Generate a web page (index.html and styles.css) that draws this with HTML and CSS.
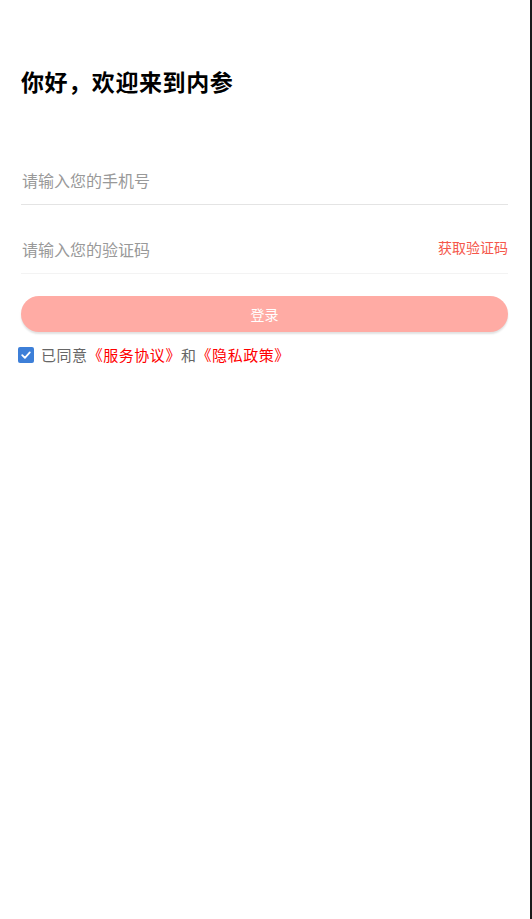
FILE: index.html
```html
<!DOCTYPE html>
<html lang="zh-CN">
<head>
    <meta charset="UTF-8">
    <meta name="viewport" content="width=device-width, initial-scale=1.0">
    <title>登录</title>
    <link rel="stylesheet" href="styles.css">
</head>
<body>
    <div class="page">
        <h1 class="title">你好，欢迎来到内参</h1>

        <div class="form">
            <div class="field">
                <input type="text" placeholder="请输入您的手机号">
            </div>
            <div class="field field-code">
                <input type="text" placeholder="请输入您的验证码">
                <span class="get-code">获取验证码</span>
            </div>

            <button class="login-button">登录</button>

            <label class="agree">
                <span class="check">
                    <svg width="12" height="12" viewBox="0 0 12 12">
                        <path d="M2.2 6.2 L4.9 8.8 L9.8 3.4" fill="none" stroke="#fff" stroke-width="1.8" stroke-linecap="round" stroke-linejoin="round"/>
                    </svg>
                </span>
                <span>已同意<a class="link">《服务协议》</a>和<a class="link">《隐私政策》</a></span>
            </label>
        </div>
    </div>
</body>
</html>
```

FILE: styles.css
```css
body {
    margin: 0;
    padding: 0;
    background-color: #1a1a1a;
    font-family: 'Noto Sans CJK SC', 'Noto Sans', sans-serif;
}
.page {
    width: 530px;
    min-height: 100vh;
    background-color: #fff;
    box-sizing: border-box;
    padding: 64px 22px 0 21px;
}
.title {
    margin: 0;
    font-size: 23px;
    font-weight: bold;
    color: #000;
    line-height: 34px;
    letter-spacing: 0.6px;
}
.form {
    margin-top: 38px;
}
.field {
    display: flex;
    align-items: center;
    height: 68px;
    border-bottom: 1px solid #e4e4e4;
}
.field-code {
    border-bottom-color: #f3f3f3;
}
.field input {
    flex: 1;
    border: none;
    outline: none;
    padding: 0 0 0 1px;
    margin-top: 20px;
    font-family: inherit;
    font-size: 16px;
    color: #333;
    background: transparent;
}
.field input::placeholder {
    color: #999;
}
.get-code {
    margin-top: 16px;
    font-size: 14px;
    color: #f5574b;
}
.login-button {
    display: block;
    width: 100%;
    height: 36px;
    margin-top: 22px;
    border: none;
    border-radius: 18px;
    background-color: #ffaba4;
    color: #fff;
    font-family: inherit;
    font-size: 14px;
    box-shadow: 0 2px 2px rgba(0, 0, 0, 0.12);
}
.agree {
    display: flex;
    align-items: center;
    margin: 12px 0 0 -3px;
    font-size: 15px;
    letter-spacing: 0.55px;
    color: #666;
}
.check {
    display: flex;
    align-items: center;
    justify-content: center;
    width: 16px;
    height: 16px;
    border-radius: 2px;
    background-color: #3d7fd8;
    margin-right: 7px;
}
.link {
    color: #f00;
}
```
